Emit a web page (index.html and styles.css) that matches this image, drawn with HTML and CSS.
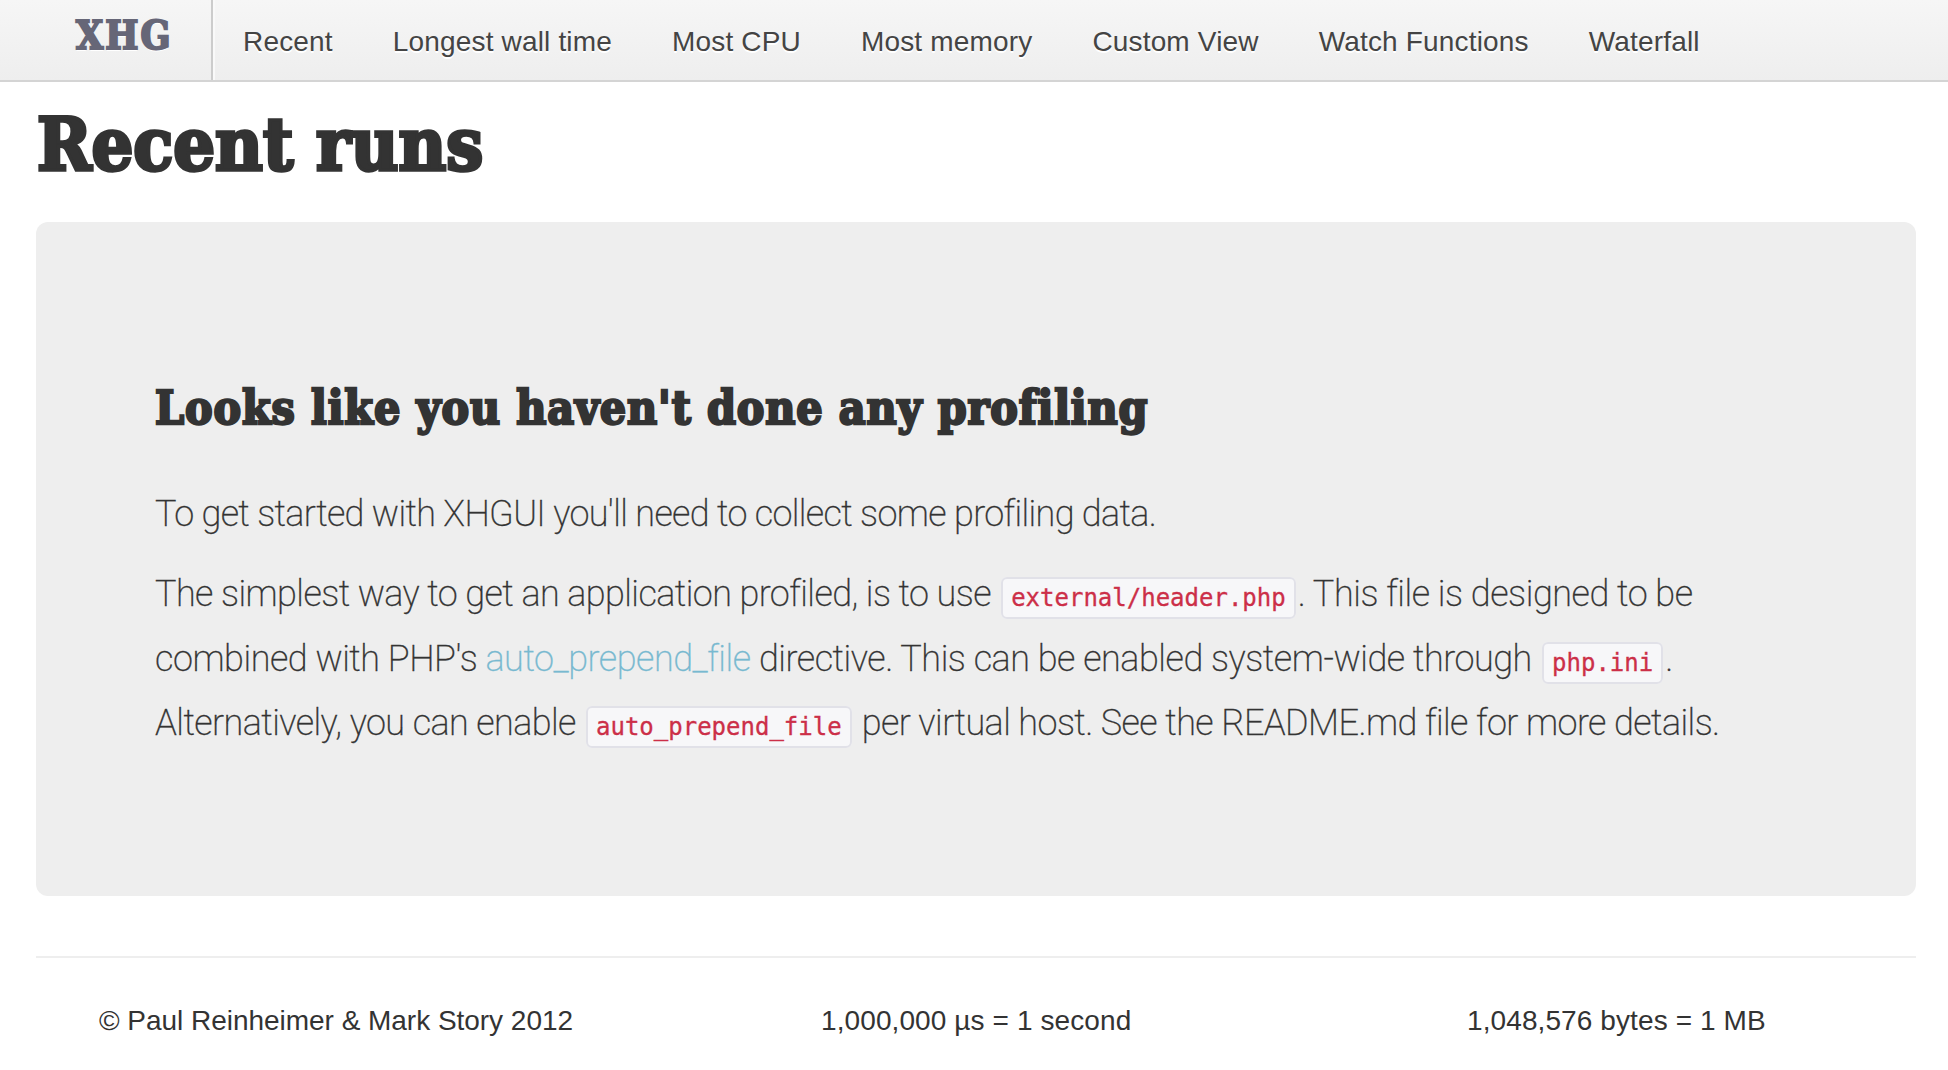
FILE: index.html
```html
<!DOCTYPE html>
<html lang="en">
<head>
<meta charset="utf-8">
<title>XHGui - Recent runs</title>
<link rel="stylesheet" href="styles.css">
</head>
<body>
<header class="navbar">
  <a class="brand">XHG</a>
  <nav class="nav">
    <a>Recent</a>
    <a>Longest wall time</a>
    <a>Most CPU</a>
    <a>Most memory</a>
    <a>Custom View</a>
    <a>Watch Functions</a>
    <a>Waterfall</a>
  </nav>
</header>
<main class="container">
  <h1>Recent runs</h1>
  <section class="hero-unit">
    <h2>Looks like you haven't done any profiling</h2>
    <p class="intro">To get started with XHGUI you'll need to collect some profiling data.</p>
    <p>
      <span class="line"><span class="tight">The simplest way to get an application profiled, is to use</span> <code>external/header.php</code>. This file is designed to be</span>
      <span class="line">combined with PHP's <a class="link">auto_prepend_file</a> directive. This can be enabled system-wide through <code>php.ini</code>.</span>
      <span class="line tight">Alternatively, you can enable <code>auto_prepend_file</code> per virtual host. See the README.md file for more details.</span>
    </p>
  </section>
  <footer class="footer">
    <span class="authors">© Paul Reinheimer &amp; Mark Story 2012</span>
    <span>1,000,000 µs = 1 second</span>
    <span>1,048,576 bytes = 1 MB</span>
  </footer>
</main>
</body>
</html>
```
FILE: styles.css
```css
* { box-sizing: border-box; }

body {
  margin: 0;
  background: #fff;
  color: #333;
  font: 28px/40px "Liberation Sans", Arial, sans-serif;
}

.navbar {
  display: flex;
  height: 82px;
  padding-left: 36px;
  border-bottom: 2px solid #d4d4d4;
  background: linear-gradient(#f6f6f6, #eee);
  text-shadow: 0 2px 0 #fff;
}

.brand {
  width: 177px;
  padding: 15px 0 0 40px;
  border-right: 2px solid #ccc;
  box-shadow: 2px 0 0 #f9f9f9;
  color: #667;
  font: bold 39px/40px "DejaVu Serif Condensed", "DejaVu Serif", serif;
  letter-spacing: 2px;
  -webkit-text-stroke: 2px #667;
}

.nav {
  display: flex;
  letter-spacing: 0.17px;
}

.nav a {
  padding: 22px 30px 18px;
  color: #444;
}

.container { padding: 0 32px 0 36px; }

h1, h2 {
  margin: 0;
  font-family: "DejaVu Serif Condensed", "DejaVu Serif", serif;
  font-weight: bold;
  white-space: nowrap;
}

h1 {
  padding: 22px 0 38px 1px;
  font-size: 73px;
  line-height: 80px;
  letter-spacing: 0;
  -webkit-text-stroke: 3.4px #333;
}

h2 {
  margin-bottom: 46px;
  font-size: 46px;
  line-height: 60px;
  letter-spacing: 0.9px;
  -webkit-text-stroke: 2.4px #333;
}

.hero-unit {
  height: 674px;
  padding: 156px 119px 0;
  border-radius: 12px;
  background: #eee;
  font: 200 36px/60px Roboto, "Liberation Sans", sans-serif;
  letter-spacing: -0.46px;
  -webkit-text-stroke: 0.3px;
}

.hero-unit p { margin: 0; }
.hero-unit .intro { margin-bottom: 18px; letter-spacing: -0.65px; }

.line {
  display: block;
  height: 64.5px;
  line-height: 64.5px;
  white-space: nowrap;
}

.tight { letter-spacing: -0.57px; }

.link { color: #78b9d0; }

code {
  margin: 0 2px;
  padding: 5px 8px;
  border: 2px solid #e1e1e8;
  border-radius: 6px;
  background: #f7f7f9;
  color: #cc2f48;
  font: 24px/40px "DejaVu Sans Mono", monospace;
  letter-spacing: 0;
}

.footer {
  display: grid;
  grid-template-columns: 722px 646px auto;
  margin-top: 60px;
  padding: 43px 0 0 63px;
  border-top: 2px solid #eee;
  letter-spacing: 0.1px;
}

.authors { letter-spacing: -0.03px; }
```
